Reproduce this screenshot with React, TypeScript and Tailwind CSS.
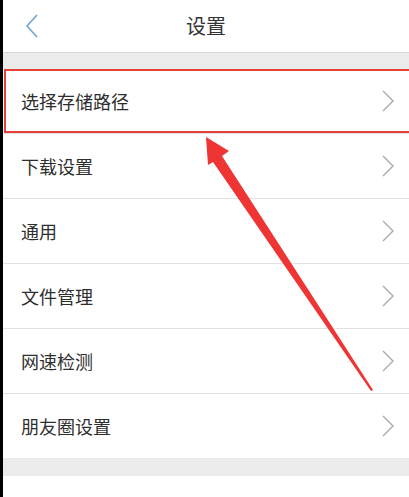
import { Fragment } from "react"

const items = ["选择存储路径", "下载设置", "通用", "文件管理", "网速检测", "朋友圈设置"]

function ChevronRight() {
  return (
    <svg width="14" height="24" viewBox="0 0 14 24" className="shrink-0">
      <path d="M2 2 L12 12 L2 22" fill="none" stroke="#a9a9a9" strokeWidth="1.4" />
    </svg>
  )
}

export default function App() {
  return (
    <div
      className="relative flex w-[409px] h-[497px] overflow-hidden bg-white"
      style={{ fontFamily: '"Noto Sans CJK SC", "Noto Sans", sans-serif' }}
    >
      {/* dark edge from the cropped screen */}
      <div className="w-[3px] shrink-0 bg-black" />

      <div className="flex flex-1 flex-col">
        {/* Header */}
        <div className="relative flex h-[53px] shrink-0 items-center justify-center border-b border-[#d8d8d8] bg-white">
          <svg width="16" height="26" viewBox="0 0 16 26" className="absolute left-[21px] top-[13px]">
            <path d="M13 2 L3 13 L13 24" fill="none" stroke="#6ea3d6" strokeWidth="1.6" />
          </svg>
          <span className="text-[20px] text-[#333]">设置</span>
        </div>

        <div className="h-[16px] shrink-0 bg-[#ebebeb]" />

        {/* List */}
        <div className="flex flex-col bg-white">
          {items.map((label, i) => (
            <Fragment key={label}>
              {i > 0 && <div className="h-px bg-[#e2e2e2]" />}
              <div className="relative flex h-[64px] items-center justify-between pl-[18px] pr-[14px]">
                <span className="text-[18px] text-[#2e2e2e]">{label}</span>
                <ChevronRight />
                {i === 0 && (
                  <div className="absolute left-px -right-2 top-0 bottom-0 border-2 border-[#e5403a]" />
                )}
              </div>
            </Fragment>
          ))}
        </div>

        <div className="h-[18px] shrink-0 bg-[#ebebeb]" />
        <div className="flex-1 bg-white" />
      </div>

      {/* Annotation arrow */}
      <svg className="pointer-events-none absolute left-0 top-0" width="409" height="497" viewBox="0 0 409 497">
        <polygon points="206,137 229,151 222,156 373,390 371,391 213,162 208,165" fill="#ef3434" />
      </svg>
    </div>
  )
}
